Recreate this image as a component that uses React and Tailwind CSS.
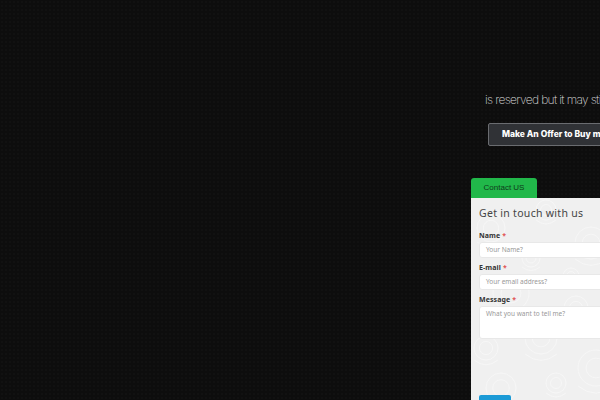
const SWIRLS = [
  [20, 30, 14], [75, 12, 10], [120, 45, 16], [40, 95, 18], [105, 110, 12], [15, 150, 12],
  [70, 140, 16], [125, 170, 18], [30, 190, 15], [85, 185, 10], [60, 60, 9], [100, 78, 8],
]

function Swirls() {
  return (
    <svg className="absolute inset-0 h-full w-full" fill="none" stroke="#f8f8f8" strokeWidth="0.8" aria-hidden="true">
      {SWIRLS.map(([x, y, r]) => (
        <g key={`${x}-${y}`}>
          <circle cx={x} cy={y} r={r} />
          <circle cx={x} cy={y} r={r * 0.55} />
          <path d={`M${x - r} ${y + r}q${r} ${r * 0.8} ${r * 2} 0`} />
        </g>
      ))}
    </svg>
  )
}

function Field({ label, placeholder, className }) {
  return (
    <div className="mb-[3px]">
      <div className="h-[13px] text-[7px] leading-[13px] font-bold tracking-[0.1px] text-[#333333]">
        {label} <span className="text-[#e05555]">*</span>
      </div>
      <div className={`w-[200px] rounded-[3px] border border-[#e8e8e8] bg-white pl-[6px] text-[6.5px] text-[#999999] ${className}`}>
        {placeholder}
      </div>
    </div>
  )
}

export default function App() {
  return (
    <div className="h-[400px] w-[600px] overflow-hidden bg-[#0d0d0d] bg-[radial-gradient(#111111_1px,transparent_1px)] bg-[length:4px_4px] pt-[92px] pl-[471px] font-['Noto_Sans',sans-serif]">
      <p className="ml-[14px] w-[300px] text-[12px] leading-[15px] font-extralight tracking-[-0.65px] whitespace-nowrap text-[#dddddd] font-['Inter',sans-serif]">
        is reserved but it may still be available
      </p>
      <div className="mt-[16px] ml-[17px] flex h-[23px] w-[300px] items-center rounded-[2px] border border-[#6a6c70] bg-[#303236] pb-[1px] pl-[13px] text-[8.5px] font-extrabold whitespace-nowrap text-white font-['Inter',sans-serif]">
        Make An Offer to Buy mymovies.com
      </div>
      <div className="mt-[32px] flex h-[20px] w-[66px] items-center justify-center rounded-t-[3px] bg-[#21b84a] text-[8px] text-[#0f3a1a] font-['Liberation_Sans',sans-serif]">
        Contact US
      </div>
      <div className="relative h-[300px] w-[300px] bg-[#f0f0f0]">
        <Swirls />
        <div className="relative px-[8px] pt-[8px]">
          <h2 className="mb-[9px] text-[10.5px] leading-[14px] tracking-[0.3px] text-[#444444]">
            Get in touch with us
          </h2>
          <Field label="Name" placeholder="Your Name?" className="flex h-[16px] items-center" />
          <Field label="E-mail" placeholder="Your email address?" className="flex h-[16px] items-center" />
          <Field label="Message" placeholder="What you want to tell me?" className="h-[33px] pt-[2px]" />
          <div className="mt-[56px] flex h-[20px] w-[32px] items-center justify-center rounded-[2px] bg-[#1b9ad6] text-[7px] text-white">
            Submit
          </div>
        </div>
      </div>
    </div>
  )
}
